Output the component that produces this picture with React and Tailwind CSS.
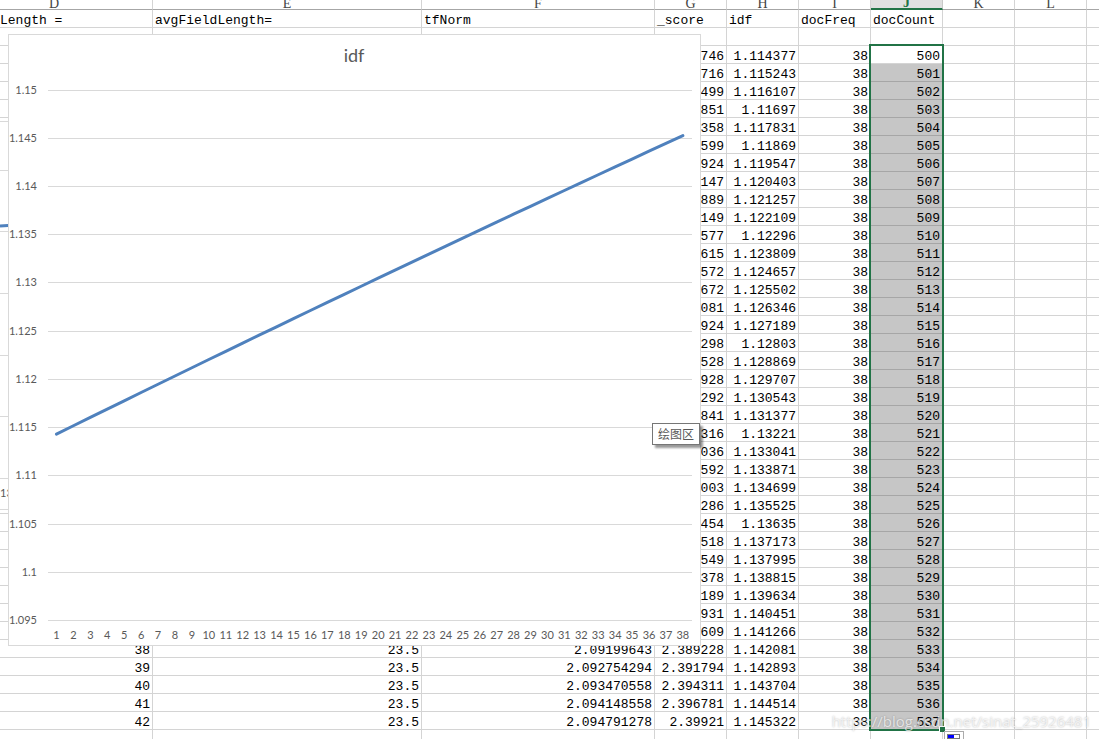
import React from "react";

const columns = [
  { name: "D", width: "w-[153px]", title: "Length =" },
  { name: "E", width: "w-[269px]", title: "avgFieldLength=" },
  { name: "F", width: "w-[233px]", title: "tfNorm" },
  { name: "G", width: "w-[72px]", title: "_score" },
  { name: "H", width: "w-[72px]", title: "idf" },
  { name: "I", width: "w-[72px]", title: "docFreq" },
  { name: "J", width: "w-[72px]", title: "docCount" },
  { name: "K", width: "w-[72px]", title: "" },
  { name: "L", width: "w-[72px]", title: "" },
  { name: "", width: "", title: "" },
];

const scores = [
  "746", "716", "499", "851", "358", "599", "924", "147", "889", "149",
  "577", "615", "572", "672", "081", "924", "298", "528", "928", "292",
  "841", "316", "036", "592", "003", "286", "454", "518", "549", "378",
  "189", "931", "609", "2.389228", "2.391794", "2.394311", "2.396781", "2.39921",
];

const tfNorms = {
  38: "2.09199643",
  39: "2.092754294",
  40: "2.093470558",
  41: "2.094148558",
  42: "2.094791278",
};

const rows = scores.map((score, i) => ({
  length: i + 5,
  tfNorm: tfNorms[i + 5] ?? "",
  score,
  idf: Number(Math.log10((501 + i) / 38.5).toFixed(6)),
  docFreq: 38,
  docCount: 500 + i,
}));

const ticks = ["1.15", "1.145", "1.14", "1.135", "1.13", "1.125", "1.12", "1.115", "1.11", "1.105", "1.1", "1.095"];

const cell = "h-[18px] border-r border-b border-[#d4d4d4] p-0 pt-1 leading-[13px] whitespace-nowrap last:border-r-0";

const Cell = ({ children, className = "" }) => (
  <td className={`${cell} pr-[2px] text-right ${className}`}>{children}</td>
);

const EmptyRow = () => (
  <tr>
    {columns.map((c, i) => (
      <td key={i} className={cell}></td>
    ))}
  </tr>
);

const Sheet = () => (
  <table className="w-full table-fixed border-separate border-spacing-0 font-['Liberation_Mono','Noto_Sans_CJK_SC',monospace] text-[13px] text-black">
    <colgroup>
      {columns.map((c, i) => (
        <col key={i} className={c.width} />
      ))}
    </colgroup>
    <thead>
      <tr className="font-['Liberation_Serif',serif] text-sm">
        {columns.map((c, i) => (
          <th
            key={i}
            scope="col"
            className={`border-r p-0 font-normal last:border-r-0 ${
              c.name === "J"
                ? "border-b-2 border-r-[#c8c8c8] border-b-[#217346] bg-[#e0e0e0] text-[#217346]"
                : "border-b border-r-[#d4d4d4] border-b-[#a6a6a6] text-[#444]"
            } ${c.name === "D" ? "pr-11" : ""}`}
          >
            <div className={`flex items-end justify-center overflow-hidden leading-[10px] ${c.name === "J" ? "h-2 font-bold" : "h-[9px]"}`}>
              {c.name}
            </div>
          </th>
        ))}
      </tr>
    </thead>
    <tbody>
      <tr>
        {columns.map((c, i) => (
          <td key={i} className={`${cell} ${i === 0 ? "" : "pl-[2px]"}`}>
            {c.title}
          </td>
        ))}
      </tr>
      <EmptyRow />
      {rows.map((r, i) => (
        <tr key={r.docCount}>
          <Cell>{r.length}</Cell>
          <Cell>23.5</Cell>
          <Cell>{r.tfNorm}</Cell>
          <Cell>{r.score}</Cell>
          <Cell>{r.idf}</Cell>
          <Cell>{r.docFreq}</Cell>
          <Cell className={i === 0 ? "" : "border-b-[#a6a6a6] bg-[#c6c6c6]"}>{r.docCount}</Cell>
          <Cell />
          <Cell />
          <Cell />
        </tr>
      ))}
      <EmptyRow />
    </tbody>
  </table>
);

// Right edge of the chart that sits behind the idf one
const BackChart = () => (
  <div className="absolute top-[121px] left-0 h-[389px] w-4 overflow-hidden border-y border-[#d9d9d9] bg-white">
    <svg className="block" width="16" height="387" viewBox="0 0 16 387">
      {[48, 109, 171, 233, 294, 356].map((y) => (
        <line key={y} x1="0" x2="16" y1={y + 0.5} y2={y + 0.5} stroke="#d9d9d9" />
      ))}
      <path d="M0 104L16 103" stroke="#4f81bd" strokeWidth="3" />
      <text x="0" y="375" className="fill-[#595959] font-['Lato',sans-serif] text-[11px]">
        13
      </text>
    </svg>
  </div>
);

const Chart = () => {
  const x = (i) => 39 + (i + 0.5) * 16.93;
  const y = (v) => 55 + ((1.15 - v) / 0.055) * 530.5;
  const points = rows.map((r, i) => `${x(i)},${y(r.idf) + 0.5}`).join(" ");

  return (
    <div className="absolute top-[34px] left-2 h-[612px] w-[693px] border border-[#d9d9d9] bg-white">
      <svg className="block font-['Lato',sans-serif]" width="691" height="610" viewBox="0 0 691 610" role="img" aria-label="idf">
        <text x="345" y="27" textAnchor="middle" className="fill-[#595959] text-lg">
          idf
        </text>
        {ticks.map((t) => {
          const lineY = Math.floor(y(Number(t))) + 0.5;
          return (
            <g key={t}>
              <line x1="39" x2="683" y1={lineY} y2={lineY} stroke="#d9d9d9" />
              <text x="28" y={lineY + 3} textAnchor="end" className="fill-[#595959] text-[11px]">
                {t}
              </text>
            </g>
          );
        })}
        {rows.map((r, i) => (
          <text key={i} x={x(i)} y="604" textAnchor="middle" className="fill-[#595959] text-[11px]">
            {i + 1}
          </text>
        ))}
        <polyline points={points} fill="none" stroke="#4f81bd" strokeWidth="3" strokeLinecap="round" strokeLinejoin="round" />
      </svg>
    </div>
  );
};

export default function App() {
  return (
    <div className="relative h-screen overflow-hidden bg-white">
      <Sheet />
      <BackChart />
      <Chart />

      {/* Selection frame, fill handle and auto fill button */}
      <div className="absolute top-[44px] left-[869px] h-[687px] w-[75px] border-2 border-[#217346]"></div>
      <div className="absolute top-[726px] left-[939px] h-[6px] w-[6px] border-t border-l border-white bg-[#217346]"></div>
      <button aria-label="Auto fill options" className="absolute top-[731px] left-[944px] h-5 w-5 border border-[#ababab] bg-white">
        <svg className="block" width="18" height="18" viewBox="0 0 18 18">
          <rect x="2.5" y="2.5" width="12" height="4" fill="#fff" stroke="#777" />
          <rect x="3" y="3" width="6" height="3" fill="#0000ff" />
        </svg>
      </button>

      <div role="tooltip" className="absolute top-[423px] left-[652px] border border-[#767676] bg-white px-[5px] font-['Noto_Sans_CJK_SC',sans-serif] text-xs leading-5 text-[#575757] shadow-[3px_3px_2px_rgba(0,0,0,0.4)]">
        绘图区
      </div>

      <div className="absolute right-2 bottom-[6px] font-['Open_Sans',sans-serif] text-[15px] leading-6 text-white/70 [text-shadow:0_0_2px_rgba(0,0,0,0.3)]">
        https://blog.csdn.net/sinat_25926481
      </div>
    </div>
  );
}
